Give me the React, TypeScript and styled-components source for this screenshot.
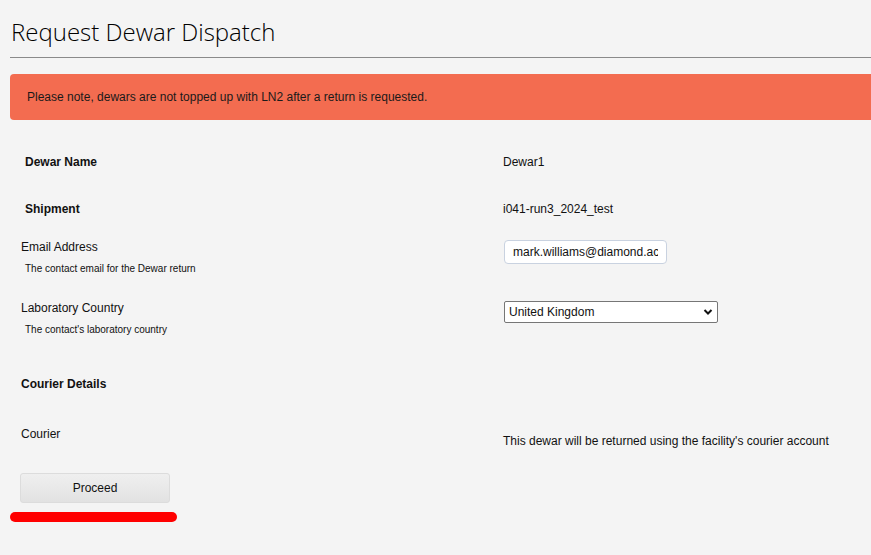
import React from "react";
import styled, { createGlobalStyle } from "styled-components";

const GlobalStyle = createGlobalStyle`
  html, body {
    margin: 0;
    padding: 0;
    background: #f4f4f4;
    overflow: hidden;
  }
  body {
    font-family: "Liberation Sans", Arial, sans-serif;
    font-size: 12px;
    color: #111;
  }
`;

const Page = styled.div`
  width: 986px;
  padding-left: 10px;
`;

const Header = styled.div`
  border-bottom: 1px solid #8a8a8a;
  padding: 18px 0 11px 1px;
`;

const Title = styled.h1`
  margin: 0;
  font-family: "Open Sans", "Liberation Sans", sans-serif;
  font-weight: 300;
  font-size: 24px;
  line-height: 28px;
  color: #000;
`;

const Banner = styled.div`
  margin-top: 16px;
  height: 46px;
  display: flex;
  align-items: center;
  padding-left: 17px;
  background: #f36c50;
  border-radius: 4px 0 0 4px;
  color: #1a1a1a;
  font-size: 12px;
`;

const Rows = styled.div`
  margin-top: 18px;
`;

const InfoRow = styled.div`
  display: grid;
  grid-template-columns: 493px 1fr;
  height: 47px;
  align-items: center;
`;

const InfoLabel = styled.div`
  padding-left: 15px;
  font-weight: bold;
`;

const FormRow = styled.div<{ $height: number }>`
  display: grid;
  grid-template-columns: 493px 1fr;
  align-items: start;
  height: ${(p) => p.$height}px;
  padding-top: 8px;
  box-sizing: border-box;
`;

const FieldLabel = styled.div`
  padding-left: 11px;
  line-height: 14px;
`;

const FieldHint = styled.div`
  margin-top: 9px;
  padding-left: 4px;
  font-size: 10px;
  line-height: 12px;
`;

const TextInput = styled.input`
  margin: 0 0 0 1px;
  width: 163px;
  height: 24px;
  box-sizing: border-box;
  padding: 0 8px;
  border: 1px solid #c9d2e0;
  border-radius: 4px;
  background: #fff;
  font-family: "Liberation Sans", Arial, sans-serif;
  font-size: 12px;
  color: #111;
  outline: none;
`;

const SelectBox = styled.div`
  position: relative;
  margin: 0 0 0 1px;
  width: 214px;
  height: 22px;
  box-sizing: border-box;
  border: 1px solid #767676;
  border-radius: 2px;
  background: #fff;
  display: flex;
  align-items: center;
  padding-left: 4px;
  font-size: 12px;
`;

const Chevron = styled.svg`
  position: absolute;
  right: 4px;
  top: 6px;
`;

const SectionTitle = styled.div`
  padding-left: 11px;
  font-weight: bold;
  line-height: 14px;
  height: 42px;
`;

const CourierNote = styled.div`
  padding-top: 7px;
  line-height: 14px;
`;

const ProceedButton = styled.button`
  display: block;
  margin-left: 10px;
  width: 150px;
  height: 30px;
  border: 1px solid #dcdcdc;
  border-radius: 3px;
  background: linear-gradient(#efefef, #e2e2e2);
  font-family: "Liberation Sans", Arial, sans-serif;
  font-size: 12px;
  color: #111;
`;

const Highlight = styled.div`
  margin-top: 9px;
  width: 167px;
  height: 10px;
  border-radius: 5px;
  background: #ff0000;
`;

export default function App() {
  return (
    <>
      <GlobalStyle />
      <Page>
        <Header>
          <Title>Request Dewar Dispatch</Title>
        </Header>
        <Banner>Please note, dewars are not topped up with LN2 after a return is requested.</Banner>
        <Rows>
          <InfoRow>
            <InfoLabel>Dewar Name</InfoLabel>
            <div>Dewar1</div>
          </InfoRow>
          <InfoRow>
            <InfoLabel>Shipment</InfoLabel>
            <div>i041-run3_2024_test</div>
          </InfoRow>
          <FormRow $height={61}>
            <FieldLabel>
              Email Address
              <FieldHint>The contact email for the Dewar return</FieldHint>
            </FieldLabel>
            <TextInput defaultValue="mark.williams@diamond.ac.uk" />
          </FormRow>
          <FormRow $height={84}>
            <FieldLabel>
              Laboratory Country
              <FieldHint>The contact's laboratory country</FieldHint>
            </FieldLabel>
            <SelectBox>
              United Kingdom
              <Chevron width="10" height="8" viewBox="0 0 10 8">
                <path d="M1.5 2 L5 5.5 L8.5 2" fill="none" stroke="#111" strokeWidth="2" />
              </Chevron>
            </SelectBox>
          </FormRow>
          <SectionTitle>Courier Details</SectionTitle>
          <FormRow $height={54}>
            <FieldLabel>Courier</FieldLabel>
            <CourierNote>This dewar will be returned using the facility's courier account</CourierNote>
          </FormRow>
        </Rows>
        <ProceedButton>Proceed</ProceedButton>
        <Highlight />
      </Page>
    </>
  );
}
